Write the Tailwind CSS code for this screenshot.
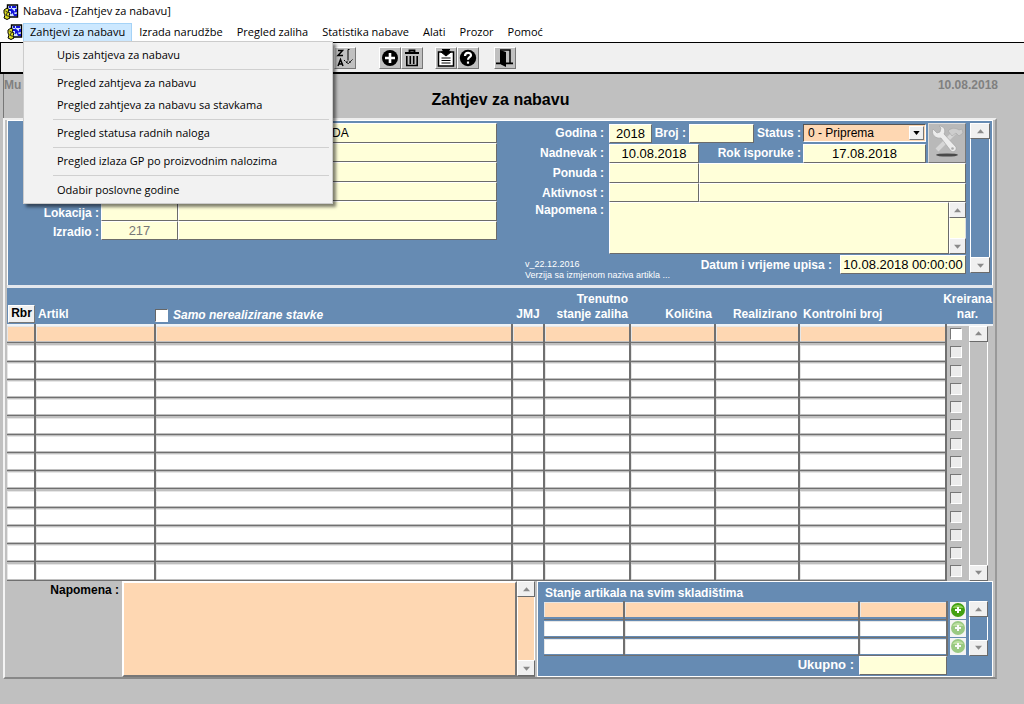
<!DOCTYPE html>
<html lang="hr">
<head>
<meta charset="utf-8">
<title>Nabava - [Zahtjev za nabavu]</title>
<script src="https://cdn.jsdelivr.net/npm/@tailwindcss/browser@4"></script>
</head>
<body class="relative min-h-screen bg-[#c0c0c0] font-['Liberation_Sans',Arial,sans-serif] text-xs text-black">

<svg class="hidden" aria-hidden="true">
  <symbol id="app" viewBox="0 0 16 16">
    <path d="M4.500 1h10v12h-10z" fill="#cfe4ff" stroke="#000" stroke-width="1.400"/>
    <path d="M6 2h2v2H6zM9 2h4v2H9zM12 5h2v3h-2zM11 10h3v2h-3zM6 5h2v2H6z" fill="#1414d8"/>
    <path d="M8 4v6.500l1.500-1.500L11 12l1.200-.6L11 8.500h2z" fill="#1414d8"/>
    <path d="M1 6l3-2 2 1.500-1 2.500 2 1-1 3 1 2-3 1.500L1 14l1-3-1-2z" fill="#dcdc20" stroke="#000"/>
    <path d="M2.500 7l2 1.500L3 11l2.500 1.500" fill="none" stroke="#222"/>
  </symbol>
  <symbol id="up" viewBox="0 0 8 5"><path d="M4 0L8 4.500H0z" fill="#8a8a8a"/></symbol>
  <symbol id="down" viewBox="0 0 8 5"><path d="M0 .5h8L4 5z" fill="#8a8a8a"/></symbol>
</svg>

<header class="bg-white font-['Open_Sans','Noto_Sans',sans-serif] text-[11px]">
  <div class="flex h-[22px] items-center gap-1 pt-px pl-[3px]">
    <svg class="size-4"><use href="#app"/></svg>
    <h1>Nabava - [Zahtjev za nabavu]</h1>
  </div>
  <nav class="flex h-5 items-center pl-[7px]">
    <svg class="size-4"><use href="#app"/></svg>
    <button class="h-[19px] border border-[#a5d3f7] bg-[#cce8ff] px-[6px]">Zahtjevi za nabavu</button>
    <button class="px-[7px]">Izrada narudžbe</button>
    <button class="px-[7px]">Pregled zaliha</button>
    <button class="px-[7px]">Statistika nabave</button>
    <button class="px-[7px]">Alati</button>
    <button class="px-[7px]">Prozor</button>
    <button class="px-[7px]">Pomoć</button>
  </nav>
</header>

<div class="flex h-8 items-center border-t border-b-2 border-l border-black bg-[#f0f0f0] pl-[333px]">
  <button aria-label="Sortiraj" class="size-[22px] border border-t-white border-l-white border-r-[#777] border-b-[#777] bg-[#c0c0c0]">
    <svg viewBox="0 0 20 20" class="size-5"><g fill="none" stroke="#000" stroke-width="1.500"><path d="M3 2.500h4.500l-4.500 5h5M3 18l2.500-6.500L8 18M4 16h3"/><path d="M14.500 1.500H13v11" stroke-width="1"/><path d="M9 12l4 4 5-5M11 14h5" stroke-width="1" stroke-dasharray="2 1"/></g></svg>
  </button>
  <div class="ml-[23px] flex">
    <button aria-label="Dodaj" class="size-[22px] border border-t-white border-l-white border-r-[#777] border-b-[#777] bg-[#c0c0c0]">
      <svg viewBox="0 0 20 20" class="size-5"><circle cx="10" cy="10" r="8"/><path d="M10 5v10M5 10h10" stroke="#fff" stroke-width="2.600"/></svg>
    </button>
    <button aria-label="Obriši" class="size-[22px] border border-t-white border-l-white border-r-[#777] border-b-[#777] bg-[#c0c0c0]">
      <svg viewBox="0 0 20 20" class="size-5"><path d="M3 5h14M7.500 4.500v-2h5v2" fill="none" stroke="#000" stroke-width="1.800"/><path d="M4.800 8v9.500h10.400V8M8.300 8v8M11.700 8v8" fill="none" stroke="#000" stroke-width="1.600"/></svg>
    </button>
  </div>
  <div class="ml-3 flex">
    <button aria-label="Lista" class="size-[22px] border border-t-white border-l-white border-r-[#777] border-b-[#777] bg-[#c0c0c0]">
      <svg viewBox="0 0 20 20" class="size-5"><path d="M2.500 4h15v14h-15z" fill="#fff" stroke="#000" stroke-width="1.500"/><path d="M6 1.500h8M7 2h6v2h2l-5 4-5-4h2z" stroke="#000"/><path d="M5.500 10h9M5.500 12.500h9M5.500 15h9" stroke="#000" stroke-width="1.200"/></svg>
    </button>
    <button aria-label="Pomoć" class="size-[22px] border border-t-white border-l-white border-r-[#777] border-b-[#777] bg-[#c0c0c0]">
      <svg viewBox="0 0 20 20" class="size-5"><circle cx="10" cy="10" r="8.200"/><path d="M7 8c0-4 6-4 6-.8 0 2-3 2-3 4.500" fill="none" stroke="#fff" stroke-width="2.200"/><path d="M8.900 13.500h2.200v2.200H8.900z" fill="#fff"/></svg>
    </button>
  </div>
  <button aria-label="Izlaz" class="ml-[15px] size-[22px] border border-t-white border-l-white border-r-[#777] border-b-[#777] bg-[#c0c0c0]">
    <svg viewBox="0 0 20 20" class="size-5"><path d="M5 2h10v13" fill="none" stroke="#000" stroke-width="1.500"/><path d="M5 2l6 2v15l-6-3zM1 14.500h4v1.700H1zM11 14.500h7v1.700h-7z"/></svg>
  </button>
</div>

<main class="pr-[27px] pl-[3px]">
  <div class="grid h-11 grid-cols-3 border-l border-[#777] font-bold">
    <span class="pt-[3px] text-[#808080]">Mu</span>
    <h2 class="pt-4 text-center text-base leading-5">Zahtjev za nabavu</h2>
    <span class="-mr-px pt-[3px] text-right text-[#808080]">10.08.2018</span>
  </div>

  <div class="border-t-2 border-r-2 border-b-2 border-l-2 border-t-[#eee] border-r-[#999] border-b-[#888] border-l-[#f4f4f4] pr-[2px] pl-[2px]">

    <!-- request header -->
    <section class="flex h-[165px] border border-b-0 border-white bg-[#668bb3] pt-[2px] pr-[2px]">
      <div class="grid flex-1 grid-cols-[93px_77px_minmax(0,1fr)] grid-rows-[20px_19px_20px_19px_20px_19px] content-start items-stretch font-bold text-white" id="left"></div>

      <div class="flex w-[469px] flex-col pl-7">
        <div class="flex">
          <div class="flex-1">
            <div class="flex h-5 items-center">
              <label for="godina" class="w-[84px] pr-[5px] text-right font-bold text-white">Godina :</label>
              <input id="godina" value="2018" class="h-[19px] w-[43px] border border-t-white border-l-white border-r-[#6b6b6b] border-b-[#6b6b6b] bg-[#ffffd9] text-center text-[13px]">
              <label for="broj" class="w-[37px] pr-[3px] text-right font-bold text-white">Broj :</label>
              <input id="broj" class="h-[19px] w-[65px] border border-t-white border-l-white border-r-[#6b6b6b] border-b-[#6b6b6b] bg-[#ffffd9]">
              <label for="status" class="flex-1 pr-[2px] text-right font-bold whitespace-nowrap text-white">Status :</label>
              <div class="relative h-[19px] w-[123px]">
                <select id="status" class="block h-[18px] w-full appearance-none border border-t-[#555] border-l-[#555] border-r-white border-b-white bg-[#fed7b2] pl-1"><option>0 - Priprema</option></select>
                <span class="pointer-events-none absolute top-[2px] right-[2px] flex h-[14px] w-[15px] items-center justify-center border border-t-white border-l-white border-r-[#777] border-b-[#777] bg-[#f0f0f0]"><svg viewBox="0 0 8 5" class="h-1 w-[7px]"><path d="M0 0h8L4 5z"/></svg></span>
              </div>
            </div>
            <div class="flex h-5 items-center">
              <label for="nadnevak" class="w-[84px] pr-[5px] text-right font-bold text-white">Nadnevak :</label>
              <input id="nadnevak" value="10.08.2018" class="h-[19px] w-[90px] border border-t-white border-l-white border-r-[#6b6b6b] border-b-[#6b6b6b] bg-[#ffffd9] text-center text-[13px]">
              <label for="rok" class="flex-1 pr-[2px] text-right font-bold text-white">Rok isporuke :</label>
              <input id="rok" value="17.08.2018" class="h-[19px] w-[123px] border border-t-white border-l-white border-r-[#6b6b6b] border-b-[#6b6b6b] bg-[#ffffd9] text-center text-[13px]">
            </div>
          </div>
          <button aria-label="Postavke" class="ml-[2px] h-10 w-[38px] border border-t-[#ddd] border-l-[#ddd] border-r-[#777] border-b-[#777] bg-[#b9b9b9]">
            <svg viewBox="0 0 36 38" class="h-[38px] w-9"><ellipse cx="18" cy="31" rx="11" ry="1.600" fill="#4a4a4a"/><path d="M8 26L26 8" stroke="#d6d6d6" stroke-width="4"/><path d="M19 7c4-4 8-3 11-1l3-1 1 4-4 3-3-3-4 3z" fill="#cdcdcd" stroke="#a4a4a4" stroke-width=".6"/><path d="M4 5l4 4 3-1 1-4-2-2c5 0 7 4 5 8l12 13c1 3-2 6-5 4L12 14C6 15 2 10 4 5z" fill="#ececec" stroke="#a0a0a0" stroke-width=".6"/><circle cx="23.500" cy="24.500" r="1.300" fill="#aaa"/></svg>
          </button>
        </div>
        <div class="flex h-5 items-center">
          <label for="ponuda" class="w-[84px] pr-[5px] text-right font-bold text-white">Ponuda :</label>
          <input id="ponuda" class="h-5 w-[90px] border border-t-white border-l-white border-r-[#6b6b6b] border-b-[#6b6b6b] bg-[#ffffd9]">
          <input aria-label="Naziv ponude" class="h-5 flex-1 border border-t-white border-l-white border-r-[#6b6b6b] border-b-[#6b6b6b] bg-[#ffffd9]">
        </div>
        <div class="flex h-[19px] items-center">
          <label for="aktivnost" class="w-[84px] pr-[5px] text-right font-bold text-white">Aktivnost :</label>
          <input id="aktivnost" class="h-[19px] w-[90px] border border-t-white border-l-white border-r-[#6b6b6b] border-b-[#6b6b6b] bg-[#ffffd9]">
          <input aria-label="Naziv aktivnosti" class="h-[19px] flex-1 border border-t-white border-l-white border-r-[#6b6b6b] border-b-[#6b6b6b] bg-[#ffffd9]">
        </div>
        <div class="flex h-[52px]">
          <label for="nap1" class="w-[84px] pr-[5px] text-right leading-4 font-bold text-white">Napomena :</label>
          <textarea id="nap1" class="flex-1 resize-none border border-t-white border-l-white border-r-[#6b6b6b] border-b-[#6b6b6b] bg-[#ffffd9]"></textarea>
          <div class="flex w-[17px] flex-col bg-[#ffffd9]">
            <button aria-label="Gore" class="flex h-4 items-center justify-center border border-t-white border-l-white border-r-[#6b6b6b] border-b-[#6b6b6b] bg-[#f0f0f0]"><svg class="h-[5px] w-[7px]"><use href="#up"/></svg></button>
            <div class="flex-1 border-r border-l border-l-white border-r-[#ddd]"></div>
            <button aria-label="Dolje" class="flex h-4 items-center justify-center border border-t-white border-l-white border-r-[#6b6b6b] border-b-[#6b6b6b] bg-[#f0f0f0]"><svg class="h-[5px] w-[7px]"><use href="#down"/></svg></button>
          </div>
        </div>
        <div class="flex pt-px">
          <p class="w-[150px] pt-1 text-[9px] leading-[11px] whitespace-nowrap text-white">v_22.12.2016<br>Verzija sa izmjenom naziva artikla ...</p>
          <label for="upis" class="flex-1 pt-[2px] pr-2 text-right font-bold text-white">Datum i vrijeme upisa :</label>
          <input id="upis" value="10.08.2018 00:00:00" class="h-[19px] w-[126px] border border-t-white border-l-white border-r-[#6b6b6b] border-b-[#6b6b6b] bg-[#ffffd9] text-center text-[13px]">
        </div>
      </div>

      <div class="ml-1 flex h-[150px] w-5 flex-col">
        <button aria-label="Gore" class="flex h-4 items-center justify-center border border-t-white border-l-white border-r-[#6b6b6b] border-b-[#6b6b6b] bg-[#f0f0f0]"><svg class="h-[5px] w-[7px]"><use href="#up"/></svg></button>
        <div class="flex-1 border-r border-l border-white"></div>
        <button aria-label="Dolje" class="flex h-4 items-center justify-center border border-t-white border-l-white border-r-[#6b6b6b] border-b-[#6b6b6b] bg-[#f0f0f0]"><svg class="h-[5px] w-[7px]"><use href="#down"/></svg></button>
      </div>
    </section>

    <!-- request lines -->
    <table class="w-full table-fixed border-collapse">
      <colgroup><col class="w-7"><col class="w-[120px]"><col><col class="w-8"><col class="w-[86px]"><col class="w-[85px]"><col class="w-[84px]"><col class="w-[147px]"><col class="w-[22px]"><col class="w-[25px]"></colgroup>
      <thead class="bg-[#668bb3] font-bold text-white">
        <tr class="h-[38px] border-t-3 border-b-2 border-t-[#e4e8ee] border-b-[#eef2f6] align-bottom leading-[15px]">
          <th class="pb-px pl-px"><button class="h-[18px] w-full border border-t-white border-l-white border-r-[#777] border-b-[#777] bg-[#f0f0f0] text-black">Rbr</button></th>
          <th class="pb-[2px] pl-[3px] text-left">Artikl</th>
          <th class="pb-px"><label class="flex items-center gap-[5px] italic"><input type="checkbox" class="size-[13px] appearance-none border border-t-[#666] border-l-[#666] border-r-white border-b-white bg-white">Samo nerealizirane stavke</label></th>
          <th class="pb-[2px]">JMJ</th>
          <th class="pr-[2px] pb-[2px] text-right">Trenutno<br>stanje zaliha</th>
          <th class="pr-[3px] pb-[2px] text-right">Količina</th>
          <th class="pr-[2px] pb-[2px] text-right">Realizirano</th>
          <th class="pb-[2px] pl-1 text-left">Kontrolni broj</th>
          <th colspan="2" class="pb-[2px]"><div class="-ml-1">Kreirana<br>nar.</div></th>
        </tr>
      </thead>
      <tbody id="lines"></tbody>
    </table>

    <!-- note and stock -->
    <section class="flex h-24">
      <div class="flex flex-1">
        <label for="nap2" class="w-[115px] pt-px pr-[3px] text-right font-bold">Napomena :</label>
        <textarea id="nap2" class="min-w-0 flex-1 resize-none border-2 border-t-white border-l-white border-r-[#777] border-b-[#777] bg-[#fed7b2]"></textarea>
        <div class="flex w-[18px] flex-col border-b border-[#777] bg-[#fed7b2]">
          <button aria-label="Gore" class="flex h-4 items-center justify-center border border-t-white border-l-white border-r-[#6b6b6b] border-b-[#6b6b6b] bg-[#f0f0f0]"><svg class="h-[5px] w-[7px]"><use href="#up"/></svg></button>
          <div class="flex-1 border-r border-l border-white"></div>
          <button aria-label="Dolje" class="flex h-4 items-center justify-center border border-t-white border-l-white border-r-[#6b6b6b] border-b-[#6b6b6b] bg-[#f0f0f0]"><svg class="h-[5px] w-[7px]"><use href="#down"/></svg></button>
        </div>
      </div>
      <div class="ml-[2px] w-[456px] border border-white bg-[#668bb3] pr-1 pl-[6px]">
        <h3 class="pt-[3px] pl-px leading-4 font-bold text-white">Stanje artikala na svim skladištima</h3>
        <div class="flex">
          <table class="flex-1 table-fixed border-collapse">
            <colgroup><col class="w-20"><col><col class="w-[88px]"><col class="w-[22px]"></colgroup>
            <tbody id="stock"></tbody>
          </table>
          <div class="flex w-[19px] flex-col">
            <button aria-label="Gore" class="flex h-4 items-center justify-center border border-t-white border-l-white border-r-[#6b6b6b] border-b-[#6b6b6b] bg-[#f0f0f0]"><svg class="h-[5px] w-[7px]"><use href="#up"/></svg></button>
            <div class="flex-1 border-r border-l border-white"></div>
            <button aria-label="Dolje" class="flex h-4 items-center justify-center border border-t-white border-l-white border-r-[#6b6b6b] border-b-[#6b6b6b] bg-[#f0f0f0]"><svg class="h-[5px] w-[7px]"><use href="#down"/></svg></button>
          </div>
        </div>
        <div class="flex items-center justify-end pr-[41px]">
          <label for="ukupno" class="pr-[5px] text-[13px] font-bold text-white">Ukupno :</label>
          <input id="ukupno" class="h-[19px] w-[88px] border border-t-white border-l-white border-r-[#6b6b6b] border-b-[#6b6b6b] bg-[#ffffd9]">
        </div>
      </div>
    </section>
  </div>
</main>

<!-- open menu -->
<div role="menu" class="absolute top-[41px] left-[23px] w-[310px] border border-[#ccc] bg-[#f2f2f2] py-[2px] font-['Open_Sans','Noto_Sans',sans-serif] text-[11px] shadow-[3px_3px_3px_rgba(0,0,0,0.5)]">
  <button role="menuitem" class="block h-[22px] w-full pl-[33px] text-left">Upis zahtjeva za nabavu</button>
  <hr class="my-[3px] mr-[3px] ml-[29px] h-0 border-[#d0d0d0]">
  <button role="menuitem" class="block h-[21px] w-full pl-[33px] text-left">Pregled zahtjeva za nabavu</button>
  <button role="menuitem" class="block h-[22px] w-full pl-[33px] text-left">Pregled zahtjeva za nabavu sa stavkama</button>
  <hr class="my-[3px] mr-[3px] ml-[29px] h-0 border-[#d0d0d0]">
  <button role="menuitem" class="block h-[21px] w-full pl-[33px] text-left">Pregled statusa radnih naloga</button>
  <hr class="my-[3px] mr-[3px] ml-[29px] h-0 border-[#d0d0d0]">
  <button role="menuitem" class="block h-[21px] w-full pl-[33px] text-left">Pregled izlaza GP po proizvodnim nalozima</button>
  <hr class="my-[3px] mr-[3px] ml-[29px] h-0 border-[#d0d0d0]">
  <button role="menuitem" class="block h-[22px] w-full pl-[33px] text-left">Odabir poslovne godine</button>
</div>

<script>
const field = 'block size-full min-w-0 border border-t-white border-l-white border-r-[#6b6b6b] border-b-[#6b6b6b] bg-[#ffffd9] font-normal';
document.getElementById('left').innerHTML = [
  ['', '', 'DA'], ['', '', ''], ['', '', ''], ['', '', ''], ['Lokacija :', '', ''], ['Izradio :', '217', '']
].map(([label, code, name], i) => `
  <label for="f${i}" class="self-end pr-[2px] text-right">${label}</label>
  <input id="f${i}" value="${code}" aria-label="${label || 'Šifra'}" class="${field} text-center text-[13px] text-[#777]">
  <input value="${name}" aria-label="Naziv" class="${field} pl-[153px] text-black">`).join('');

const cell = 'block h-full w-full border-t border-l border-[#e6e6e6] bg-white';
const active = 'block h-full w-full border-t border-l border-[#e6e6e6] bg-[#fed7b2]';
const td = 'border-r-2 border-b border-[#707070] p-0';
const names = ['Rbr', 'Artikl', 'Naziv artikla', 'JMJ', 'Stanje zaliha', 'Količina', 'Realizirano', 'Kontrolni broj'];
const scroll = `<td rowspan="14" class="h-px p-0 pr-[5px] pl-px align-top"><div class="flex h-[255px] flex-col">
  <button aria-label="Gore" class="flex h-4 items-center justify-center border border-t-white border-l-white border-r-[#6b6b6b] border-b-[#6b6b6b] bg-[#f0f0f0]"><svg class="h-[5px] w-[7px]"><use href="#up"/></svg></button>
  <div class="flex-1 border-r border-l border-white"></div>
  <button aria-label="Dolje" class="flex h-4 items-center justify-center border border-t-white border-l-white border-r-[#6b6b6b] border-b-[#6b6b6b] bg-[#f0f0f0]"><svg class="h-[5px] w-[7px]"><use href="#down"/></svg></button></div></td>`;
document.getElementById('lines').innerHTML = Array.from({length: 14}, (_, i) => `
  <tr class="${i % 4 === 1 ? 'h-[19px]' : 'h-[18px]'}">${names.map(n => `<td class="${td}"><input aria-label="${n}" class="${i ? cell : active} h-[17px]"></td>`).join('')}
  <td class="p-0 pl-[3px]"><input type="checkbox" aria-label="Kreirana narudžba" class="${i ? 'bg-[#ececec]' : 'bg-white'} block size-3 appearance-none border border-t-[#777] border-l-[#777] border-r-white border-b-white"></td>${i ? '' : scroll}</tr>`).join('');

document.getElementById('stock').innerHTML = [0, 1, 2].map(i => `
  <tr class="h-[18px]">${['Skladište', 'Naziv skladišta', 'Stanje'].map(n => `<td class="${td}"><input aria-label="${n}" class="${i ? cell : active} h-[17px]"></td>`).join('')}
  <td class="p-0 pl-[2px]"><button aria-label="Dodaj" class="block h-[17px] w-4 bg-[#f4f4f4]"><svg viewBox="0 0 16 16" class="${i ? 'opacity-50' : 'opacity-100'} size-4"><circle cx="8" cy="8" r="7" fill="#43a012"/><path d="M2.500 6a6 5 0 0 1 11 0z" fill="#8ccf55"/><path d="M8 5v6M5 8h6" stroke="#fff" stroke-width="2"/></svg></button></td></tr>`).join('');
</script>
</body>
</html>
